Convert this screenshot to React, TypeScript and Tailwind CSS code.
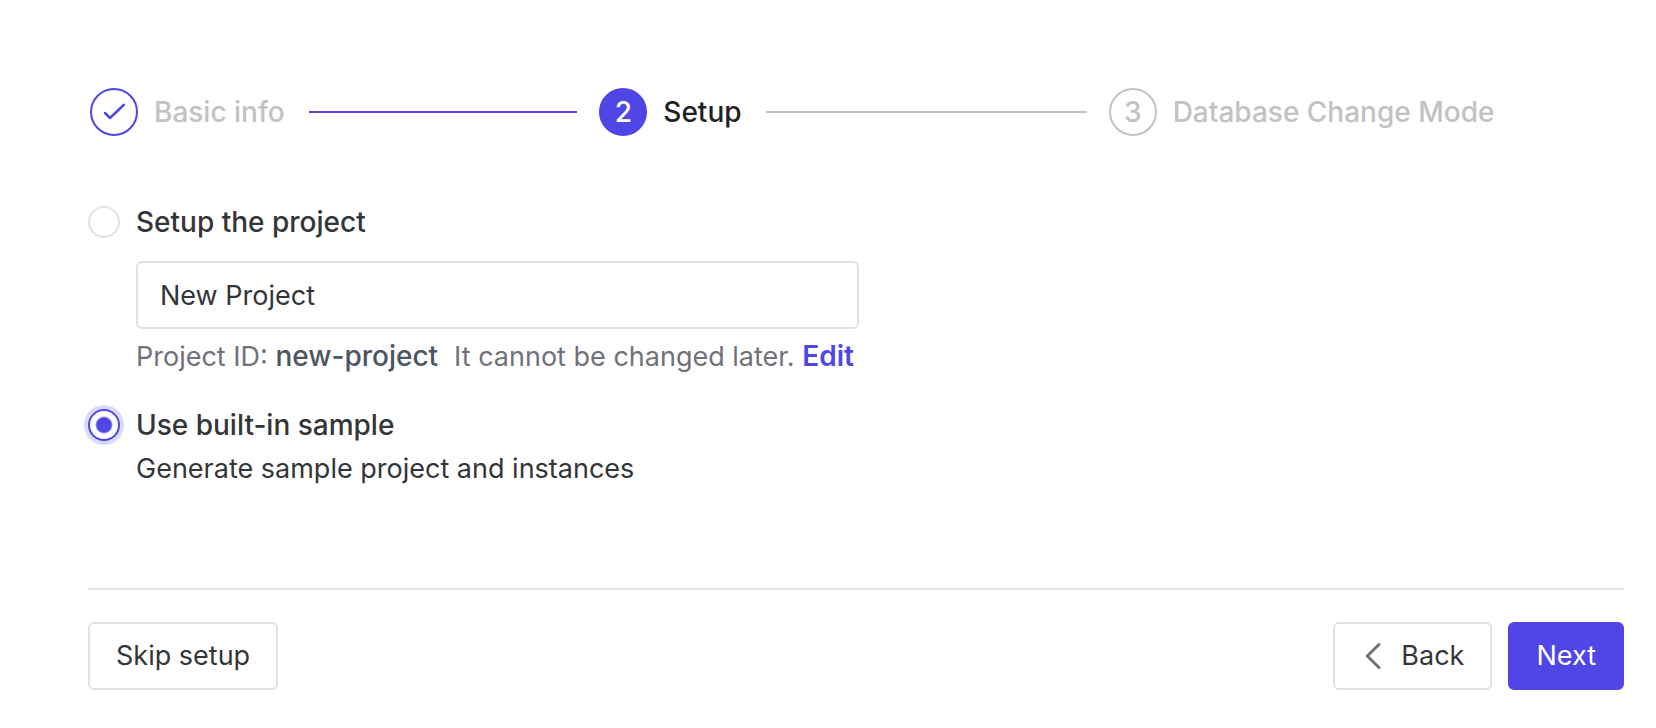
import { useState } from "react";

type StepStatus = "finished" | "active" | "pending";

const steps: { label: string; status: StepStatus }[] = [
  { label: "Basic info", status: "finished" },
  { label: "Setup", status: "active" },
  { label: "Database Change Mode", status: "pending" },
];

const circleStyles: Record<StepStatus, string> = {
  finished: "border-[#4f46e5] text-[#4f46e5]",
  active: "border-[#4f46e5] bg-[#4f46e5] text-white",
  pending: "border-[#c2c2c2] text-[#c2c2c2]",
};

const labelStyles: Record<StepStatus, string> = {
  finished: "text-[#c2c2c2]",
  active: "text-[#1f2225]",
  pending: "text-[#c2c2c2]",
};

const lineStyles: Record<StepStatus, string> = {
  finished: "bg-[#4f46e5]",
  active: "bg-[#c2c2c2]",
  pending: "bg-[#c2c2c2]",
};

function CheckIcon() {
  return (
    <svg
      viewBox="0 0 24 24"
      className="size-6"
      fill="none"
      stroke="currentColor"
      strokeWidth="2.5"
      strokeLinecap="round"
      strokeLinejoin="round"
      aria-hidden="true"
    >
      <path d="M3 13 8 18 21.8 4.8" />
    </svg>
  );
}

function ChevronLeftIcon() {
  return (
    <svg
      viewBox="0 0 16 28"
      className="h-7 w-4"
      fill="none"
      stroke="currentColor"
      strokeWidth="3"
      strokeLinecap="round"
      strokeLinejoin="round"
      aria-hidden="true"
    >
      <path d="M14 2.5 2.3 14 14 25.5" />
    </svg>
  );
}

function Steps() {
  return (
    <ol className="flex pr-1.5 pl-0.5 text-[28px] font-medium">
      {steps.map((step, index) => (
        <li
          key={step.label}
          aria-current={step.status === "active" ? "step" : undefined}
          className="flex flex-1 items-center"
        >
          <span
            className={`flex size-12 shrink-0 items-center justify-center rounded-full border-2 ${circleStyles[step.status]}`}
          >
            {step.status === "finished" ? <CheckIcon /> : index + 1}
          </span>
          <span className={`ml-4 whitespace-nowrap ${labelStyles[step.status]}`}>
            {step.label}
          </span>
          {index < steps.length - 1 && (
            <span className={`mr-[22px] ml-6 h-0.5 flex-1 ${lineStyles[step.status]}`} />
          )}
        </li>
      ))}
    </ol>
  );
}

const radioLabelClass = "flex w-fit items-center gap-4 text-[28px] leading-10 font-medium";

const radioClass =
  "size-8 shrink-0 appearance-none rounded-full border-2 border-[#e0e0e6] bg-white outline-none checked:border-[#4f46e5] checked:bg-[radial-gradient(circle,#4f46e5_7px,transparent_9px)] checked:ring-4 checked:ring-[#4f46e5]/20";

const buttonClass =
  "flex h-[68px] items-center rounded-md border-2 px-[26px] whitespace-nowrap";

export default function App() {
  const [mode, setMode] = useState("sample");
  const [name, setName] = useState("New Project");

  return (
    <main className="bg-white pt-[88px] pr-8 pb-[38px] pl-[88px] font-['Inter',sans-serif] text-[27px] leading-10 text-[#333639]">
      <Steps />

      <div className="mt-[66px]">
        <label className={radioLabelClass}>
          <input
            type="radio"
            name="mode"
            value="project"
            checked={mode === "project"}
            onChange={() => setMode("project")}
            className={radioClass}
          />
          Setup the project
        </label>
        <div className="mt-[19px] ml-12">
          <input
            type="text"
            aria-label="Project name"
            value={name}
            onChange={(event) => setName(event.target.value)}
            className="block h-[68px] w-full max-w-[723px] rounded-md border-2 border-[#e0e0e6] px-[22px] outline-none"
          />
          <div className="mt-2 text-[#71717a]">
            Project ID:{" "}
            <span className="mr-4 text-[28px] leading-none font-medium text-[#4b5563]">
              new-project
            </span>
            It cannot be changed later.{" "}
            <button type="button" className="text-[28px] leading-none font-semibold text-[#4f46e5]">
              Edit
            </button>
          </div>
        </div>
      </div>

      <div className="mt-7">
        <label className={radioLabelClass}>
          <input
            type="radio"
            name="mode"
            value="sample"
            checked={mode === "sample"}
            onChange={() => setMode("sample")}
            className={radioClass}
          />
          Use built-in sample
        </label>
        <p className="mt-1 ml-12">Generate sample project and instances</p>
      </div>

      <footer className="mt-[99px] flex items-center justify-between border-t-2 border-[#e5e5ea] pt-8">
        <button type="button" className={`${buttonClass} border-[#e0e0e6]`}>
          Skip setup
        </button>
        <div className="flex gap-4">
          <button type="button" className={`${buttonClass} gap-5 border-[#e0e0e6]`}>
            <span className="ml-1 text-[#71717a]">
              <ChevronLeftIcon />
            </span>
            Back
          </button>
          <button type="button" className={`${buttonClass} border-[#4f46e5] bg-[#4f46e5] text-white`}>
            Next
          </button>
        </div>
      </footer>
    </main>
  );
}
